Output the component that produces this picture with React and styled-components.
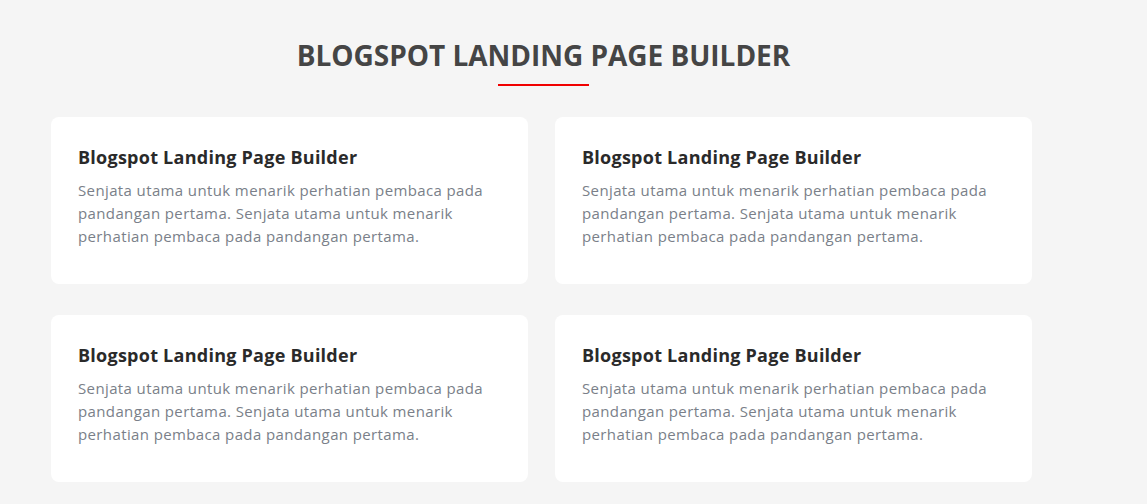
import React from "react";
import styled, { createGlobalStyle } from "styled-components";

const Global = createGlobalStyle`
  html, body { margin: 0; padding: 0; background: #f5f5f5; }
  body { font-family: "Open Sans", "Noto Sans", sans-serif; -webkit-font-smoothing: antialiased; }
`;

const Page = styled.main`
  width: 1087px;
  box-sizing: border-box;
  padding: 36px 55px 22px 51px;
`;

const Header = styled.header`
  display: flex;
  flex-direction: column;
  align-items: center;
  margin-left: -51px;
  margin-right: -55px;
  margin-bottom: 31px;
`;

const Title = styled.h1`
  margin: 0;
  font-size: 28px;
  line-height: 38px;
  font-weight: 700;
  color: #454545;
  letter-spacing: -0.03px;
`;

const Underline = styled.span`
  display: block;
  width: 91px;
  height: 2px;
  background: #f00000;
  margin-top: 10px;
`;

const Grid = styled.section`
  display: grid;
  grid-template-columns: 477px 477px;
  column-gap: 27px;
  row-gap: 31px;
`;

const Card = styled.article`
  background: #ffffff;
  border-radius: 8px;
  height: 167px;
  box-sizing: border-box;
  padding: 27px 27px 0 27px;
`;

const CardTitle = styled.h3`
  margin: 0 0 9px 0;
  font-size: 18px;
  line-height: 26px;
  font-weight: 700;
  color: #2a2a2a;
  letter-spacing: 0.25px;
`;

const CardText = styled.p`
  margin: 0;
  font-size: 15px;
  line-height: 23px;
  color: #7a7f89;
  letter-spacing: 0.38px;
`;

const text =
  "Senjata utama untuk menarik perhatian pembaca pada pandangan pertama. Senjata utama untuk menarik perhatian pembaca pada pandangan pertama.";

export default function App() {
  return (
    <>
      <Global />
      <Page>
        <Header>
          <Title>BLOGSPOT LANDING PAGE BUILDER</Title>
          <Underline />
        </Header>
        <Grid>
          {[0, 1, 2, 3].map((i) => (
            <Card key={i}>
              <CardTitle>Blogspot Landing Page Builder</CardTitle>
              <CardText>{text}</CardText>
            </Card>
          ))}
        </Grid>
      </Page>
    </>
  );
}
